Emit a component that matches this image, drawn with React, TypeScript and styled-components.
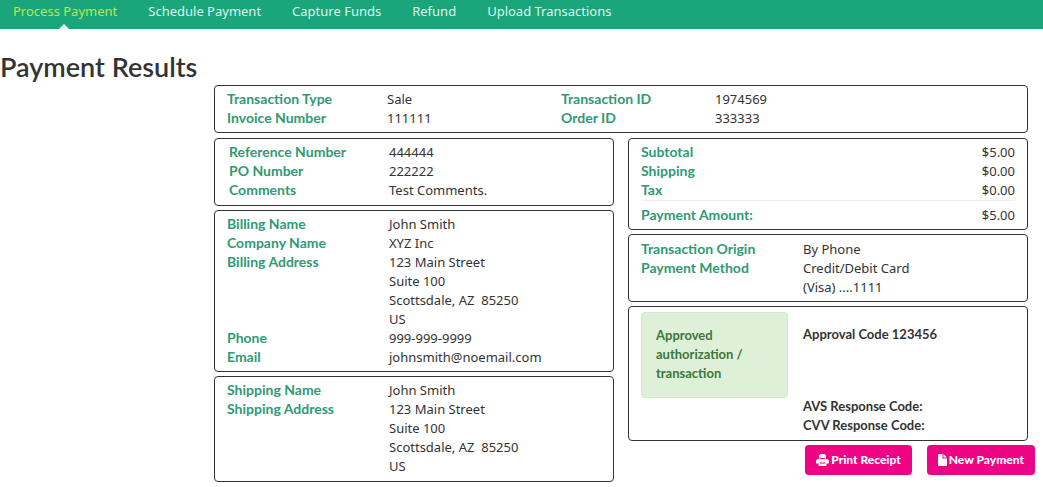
import React from "react";
import styled, { createGlobalStyle } from "styled-components";

const GlobalStyle = createGlobalStyle`
  * { box-sizing: border-box; }
  body {
    margin: 0;
    background: #fff;
    color: #333;
    font-family: Lato, "Noto Sans", sans-serif;
    font-size: 14px;
    line-height: 19px;
  }
`;

const NavBar = styled.nav`
  display: flex;
  gap: 31px;
  height: 29px;
  padding: 2px 13px 0;
  background: #1ba57a;
  font-family: "Noto Sans", sans-serif;
  font-size: 13px;
`;

const NavLink = styled.a<{ $active?: boolean }>`
  position: relative;
  color: ${(p) => (p.$active ? "#b5e853" : "#dcf5ec")};
  text-decoration: none;
  white-space: nowrap;

  &::after {
    content: "";
    display: ${(p) => (p.$active ? "block" : "none")};
    position: absolute;
    left: 50%;
    bottom: 0;
    margin-left: -6px;
    border: 5px solid transparent;
    border-top-width: 0;
    border-bottom-color: #fff;
  }
`;

const Title = styled.h1`
  margin: 22px 0 2px;
  font-size: 27px;
  line-height: 32px;
  font-weight: 600;
`;

const Main = styled.main`
  margin: 0 15px 0 214px;
`;

const Columns = styled.div`
  display: grid;
  grid-template-columns: 1fr 1fr;
  gap: 14px;
  margin-top: 5px;
  align-items: start;
`;

const Column = styled.div`
  display: flex;
  flex-direction: column;
  gap: 4px;
`;

const Panel = styled.section<{ $top?: number; $bottom?: number; $side?: number }>`
  padding: ${(p) => `${p.$top ?? 4}px ${p.$side ?? 12}px ${p.$bottom ?? 5}px`};
  border: 1px solid #333;
  border-radius: 4px;
`;

const Details = styled.dl<{ $columns?: string }>`
  display: grid;
  grid-template-columns: ${(p) => p.$columns ?? "162fr 212fr"};
  margin: 0;
`;

const Label = styled.dt`
  color: #2f9a75;
  font-weight: 700;
  line-height: 17px;
`;

const Value = styled.dd`
  margin: 0;
  font-family: "Noto Sans", sans-serif;
  font-size: 13px;
`;

const Spaced = styled.span`
  white-space: pre;
`;

const Totals = styled.table`
  width: 100%;
  border-collapse: collapse;

  th,
  td {
    padding: 0;
    vertical-align: top;
  }
  th {
    color: #2f9a75;
    font-weight: 700;
    line-height: 17px;
    text-align: left;
  }
  td {
    text-align: right;
    font-family: "Noto Sans", sans-serif;
    font-size: 13px;
  }
  tfoot th,
  tfoot td {
    padding-top: 5px;
    border-top: 1px solid #eee;
  }
`;

const Approval = styled.div`
  display: grid;
  grid-template-columns: 147fr 212fr;
  gap: 15px;
  align-items: stretch;
  font-size: 13px;
  font-weight: 700;
`;

const Status = styled.div`
  align-self: start;
  min-height: 86px;
  padding: 13px 14px;
  border: 1px solid #d0e9c6;
  border-radius: 4px;
  background: #dff0d8;
  color: #3c763d;
`;

const Codes = styled.div`
  display: flex;
  flex-direction: column;
  justify-content: space-between;
  min-height: 123px;
  padding-top: 13px;
`;

const Actions = styled.div`
  display: flex;
  justify-content: flex-end;
  gap: 15px;
  margin: 0 -7px 12px 0;
`;

const ActionButton = styled.button`
  display: flex;
  align-items: center;
  justify-content: center;
  gap: 2px;
  height: 30px;
  padding: 0 11px;
  border: 0;
  border-radius: 4px;
  background: #ed0384;
  color: #fff;
  font: 900 12px/18px Lato, "Noto Sans", sans-serif;
  white-space: nowrap;
  cursor: pointer;
`;

const PrintIcon = () => (
  <svg width="13" height="12" viewBox="0 0 13 12" fill="currentColor" aria-hidden="true">
    <path
      fillRule="evenodd"
      d="M3 5V1.500L4.500 0H8.500L10 1.500V5H11.500L13 6.500V9.500H10.500V12H2.500V9.500H0V6.500L1.500 5ZM4.200 1.500V5H8.800V1.500ZM3.500 8.500V9.500H9.500V8.500Z"
    />
    <path d="M4.200 1.200h4.600v2.800H4.200z" />
  </svg>
);

const FileIcon = () => (
  <svg width="9" height="12" viewBox="0 0 9 12" fill="currentColor" aria-hidden="true">
    <path d="M0 0h4.500v4.500H9V12H0z" />
    <path d="M5.500 0L9 3.500H5.500z" />
  </svg>
);

const navItems = ["Process Payment", "Schedule Payment", "Capture Funds", "Refund", "Upload Transactions"];

const Address = () => (
  <Value>
    123 Main Street
    <br />
    Suite 100
    <br />
    <Spaced>{"Scottsdale, AZ  85250"}</Spaced>
    <br />
    US
  </Value>
);

export default function App() {
  return (
    <>
      <GlobalStyle />
      <NavBar>
        {navItems.map((item, i) => (
          <NavLink key={item} href="#" $active={i === 0}>
            {item}
          </NavLink>
        ))}
      </NavBar>
      <Title>Payment Results</Title>
      <Main>
        <Panel $bottom={4}>
          <Details $columns="160fr 174fr 154fr 300fr">
            <Label>Transaction Type</Label>
            <Value>Sale</Value>
            <Label>Transaction ID</Label>
            <Value>1974569</Value>
            <Label>Invoice Number</Label>
            <Value>111111</Value>
            <Label>Order ID</Label>
            <Value>333333</Value>
          </Details>
        </Panel>
        <Columns>
          <Column>
            <Panel $side={14}>
              <Details $columns="160fr 210fr">
                <Label>Reference Number</Label>
                <Value>444444</Value>
                <Label>PO Number</Label>
                <Value>222222</Value>
                <Label>Comments</Label>
                <Value>Test Comments.</Value>
              </Details>
            </Panel>
            <Panel $bottom={4}>
              <Details>
                <Label>Billing Name</Label>
                <Value>John Smith</Value>
                <Label>Company Name</Label>
                <Value>XYZ Inc</Value>
                <Label>Billing Address</Label>
                <Address />
                <Label>Phone</Label>
                <Value>999-999-9999</Value>
                <Label>Email</Label>
                <Value>johnsmith@noemail.com</Value>
              </Details>
            </Panel>
            <Panel>
              <Details>
                <Label>Shipping Name</Label>
                <Value>John Smith</Value>
                <Label>Shipping Address</Label>
                <Address />
              </Details>
            </Panel>
          </Column>
          <Column>
            <Panel $bottom={4}>
              <Totals>
                <tbody>
                  <tr>
                    <th scope="row">Subtotal</th>
                    <td>$5.00</td>
                  </tr>
                  <tr>
                    <th scope="row">Shipping</th>
                    <td>$0.00</td>
                  </tr>
                  <tr>
                    <th scope="row">Tax</th>
                    <td>$0.00</td>
                  </tr>
                </tbody>
                <tfoot>
                  <tr>
                    <th scope="row">Payment Amount:</th>
                    <td>$5.00</td>
                  </tr>
                </tfoot>
              </Totals>
            </Panel>
            <Panel $top={5} $bottom={4}>
              <Details>
                <Label>Transaction Origin</Label>
                <Value>By Phone</Value>
                <Label>Payment Method</Label>
                <Value>
                  Credit/Debit Card
                  <br />
                  (Visa) ....1111
                </Value>
              </Details>
            </Panel>
            <Panel $top={5}>
              <Approval>
                <Status>Approved authorization / transaction</Status>
                <Codes>
                  <div>Approval Code 123456</div>
                  <div>
                    AVS Response Code:
                    <br />
                    CVV Response Code:
                  </div>
                </Codes>
              </Approval>
            </Panel>
            <Actions>
              <ActionButton type="button">
                <PrintIcon />
                Print Receipt
              </ActionButton>
              <ActionButton type="button">
                <FileIcon />
                New Payment
              </ActionButton>
            </Actions>
          </Column>
        </Columns>
      </Main>
    </>
  );
}
